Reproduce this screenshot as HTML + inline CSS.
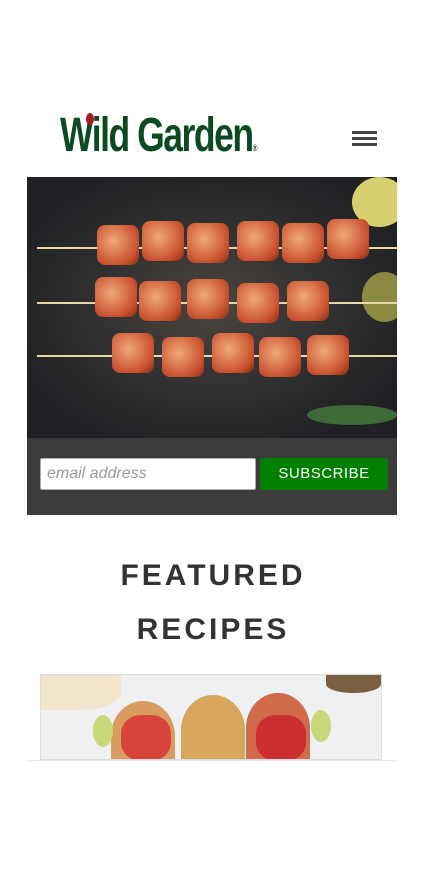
<!DOCTYPE html>
<html><head><style>
body{margin:0;width:426px;height:869px;background:#fff;position:relative;overflow:hidden;font-family:"Liberation Sans",sans-serif}
.abs{position:absolute}
.logo{left:60px;top:108px;font:bold 48px "Liberation Sans Narrow","Liberation Sans",sans-serif;color:#0c4a22;letter-spacing:-2px;transform:scaleX(0.74);transform-origin:left}
.ham div{position:absolute;left:0;width:25px;height:3px;background:#444}
.hero{left:27px;top:177px;width:370px;height:261px;background:radial-gradient(ellipse at 50% 50%,#4a4540,#1f2124 80%);overflow:hidden}
.sk{position:absolute;height:2px;background:#e8d6a8}
.ch{position:absolute;width:42px;height:40px;border-radius:8px;background:radial-gradient(circle at 40% 40%,#f0a878,#c8502e 70%,#7a2a18)}
.bar{left:27px;top:438px;width:370px;height:77px;background:#3c3c3c}
h2{position:absolute;left:0;width:426px;text-align:center;margin:0;font-size:30px;font-weight:bold;letter-spacing:3px;color:#333}
</style></head><body>
<div class="abs logo">Wild Garden<span style="font-size:9px">®</span></div>
<div class="abs" style="left:86px;top:113px;width:8px;height:12px;border-radius:50%;background:#a21d22"></div>
<div class="abs ham" style="left:352px;top:131px;width:25px;height:16px"><div style="top:0"></div><div style="top:6px"></div><div style="top:12px"></div></div>
<div class="abs hero">
<div class="abs" style="right:-10px;top:0;width:55px;height:50px;border-radius:50%;background:#d8d070"></div>
<div class="abs" style="right:-10px;top:95px;width:45px;height:50px;border-radius:50%;background:#8a8a40"></div>
<div class="sk" style="left:10px;top:70px;width:360px"></div>
<div class="sk" style="left:10px;top:125px;width:360px"></div>
<div class="sk" style="left:10px;top:178px;width:360px"></div>
<div class="ch" style="left:70px;top:48px"></div><div class="ch" style="left:115px;top:44px"></div><div class="ch" style="left:160px;top:46px"></div><div class="ch" style="left:210px;top:44px"></div><div class="ch" style="left:255px;top:46px"></div><div class="ch" style="left:300px;top:42px"></div>
<div class="ch" style="left:68px;top:100px"></div><div class="ch" style="left:112px;top:104px"></div><div class="ch" style="left:160px;top:102px"></div><div class="ch" style="left:210px;top:106px"></div><div class="ch" style="left:260px;top:104px"></div>
<div class="ch" style="left:85px;top:156px"></div><div class="ch" style="left:135px;top:160px"></div><div class="ch" style="left:185px;top:156px"></div><div class="ch" style="left:232px;top:160px"></div><div class="ch" style="left:280px;top:158px"></div>
<div class="abs" style="left:280px;top:228px;width:90px;height:20px;border-radius:50%;background:#3d6b3a"></div>
</div>
<div class="abs bar">
<div class="abs" style="left:13px;top:20px;background:#fff;border:1px solid #aaa;border-radius:2px;font-style:italic;font-size:16px;color:#999;line-height:30px;padding-left:6px;box-sizing:border-box;width:216px;height:32px">email address</div>
<div class="abs" style="left:233px;top:20px;width:128px;height:32px;background:#008000;border-radius:3px;color:#fff;text-align:center;line-height:32px;font-size:15px;letter-spacing:0.5px">SUBSCRIBE</div>
</div>
<h2 style="top:559px">FEATURED</h2>
<h2 style="top:613px">RECIPES</h2>
<div class="abs" style="left:40px;top:674px;width:342px;height:86px;background:#eef0f2;border:1px solid #ddd;box-sizing:border-box;overflow:hidden">
<div class="abs" style="left:0;top:0;width:80px;height:35px;border-radius:0 0 50% 0;background:#f1e6cc"></div>
<div class="abs" style="left:70px;top:26px;width:64px;height:70px;border-radius:50% 50% 0 0;background:#d89b60"></div>
<div class="abs" style="left:140px;top:20px;width:64px;height:70px;border-radius:50% 50% 0 0;background:#d7a55c"></div>
<div class="abs" style="left:205px;top:18px;width:64px;height:70px;border-radius:50% 50% 0 0;background:#cf6a4a"></div>
<div class="abs" style="left:80px;top:40px;width:50px;height:46px;background:#d8443a;border-radius:40%"></div>
<div class="abs" style="left:215px;top:40px;width:50px;height:46px;background:#cc2f30;border-radius:40%"></div>
<div class="abs" style="left:52px;top:40px;width:20px;height:32px;border-radius:50%;background:#c8d878"></div>
<div class="abs" style="left:270px;top:35px;width:20px;height:32px;border-radius:50%;background:#c8d878"></div>
<div class="abs" style="right:0;top:0;width:55px;height:18px;border-radius:0 0 50% 50%;background:#7a6040"></div>
</div>
<div class="abs" style="left:27px;top:760px;width:370px;height:1px;background:#e6e6e6"></div>
</body></html>
